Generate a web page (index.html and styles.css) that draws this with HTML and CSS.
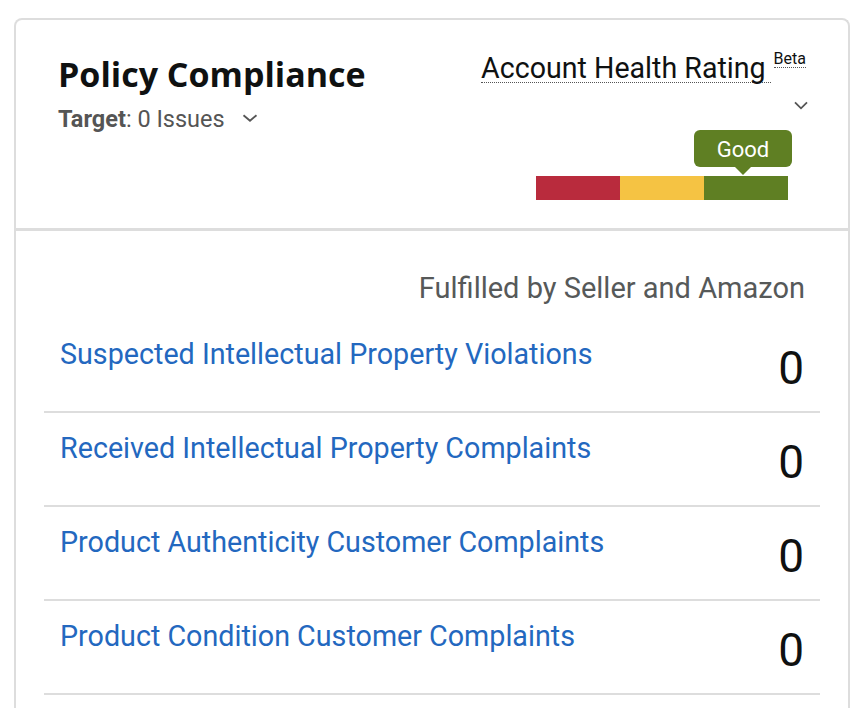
FILE: index.html
```html
<!DOCTYPE html>
<html lang="en">
<head>
<meta charset="utf-8">
<title>Policy Compliance</title>
<link rel="stylesheet" href="styles.css">
</head>
<body>
<div class="card">
  <div class="card-header">
    <div class="head-left">
      <h2 class="title">Policy Compliance</h2>
      <div class="target">
        <span><b>Target</b>: 0 Issues</span>
        <svg class="chev chev-target" width="16" height="8" viewBox="0 0 16 8"><path d="M1.5 1.2 L8 6.8 L14.5 1.2" fill="none" stroke="#555" stroke-width="1.8"/></svg>
      </div>
    </div>
    <div class="head-right">
      <div class="ahr-row">
        <span class="ahr">Account Health Rating</span>
        <span class="beta">Beta</span>
      </div>
      <svg class="chev chev-right" width="14" height="9" viewBox="0 0 14 9"><path d="M1 1.3 L7 7.3 L13 1.3" fill="none" stroke="#555" stroke-width="1.8"/></svg>
      <div class="gauge">
        <div class="badge">Good</div>
        <div class="bar">
          <span class="seg seg-red"></span>
          <span class="seg seg-yellow"></span>
          <span class="seg seg-green"></span>
        </div>
      </div>
    </div>
  </div>
  <div class="card-body">
    <div class="subhead">Fulfilled by Seller and Amazon</div>
    <div class="row">
      <a class="metric-link" href="#">Suspected Intellectual Property Violations</a>
      <span class="count">0</span>
    </div>
    <div class="row">
      <a class="metric-link" href="#">Received Intellectual Property Complaints</a>
      <span class="count">0</span>
    </div>
    <div class="row">
      <a class="metric-link" href="#">Product Authenticity Customer Complaints</a>
      <span class="count">0</span>
    </div>
    <div class="row">
      <a class="metric-link" href="#">Product Condition Customer Complaints</a>
      <span class="count">0</span>
    </div>
  </div>
</div>
</body>
</html>
```

FILE: styles.css
```css
html, body {
  margin: 0;
  padding: 0;
  background: #fff;
}
body {
  font-family: Roboto, "Liberation Sans", sans-serif;
  color: #0f1111;
  overflow: hidden;
  height: 708px;
}
.card {
  margin: 18px 0 0 14px;
  width: 832px;
  border: 2px solid #dddddd;
  border-bottom: none;
  border-radius: 8px 8px 0 0;
  height: 720px;
}
.card-header {
  display: flex;
  justify-content: space-between;
  align-items: flex-start;
  padding: 35px 40px 28px 42px;
  border-bottom: 3px solid #dddddd;
}
.title {
  margin: -1px 0 0 0;
  font-family: "Open Sans", Roboto, sans-serif;
  font-weight: 700;
  font-size: 34px;
  line-height: 40px;
  color: #0f1111;
}
.target {
  display: flex;
  align-items: center;
  margin-top: 11px;
  font-size: 23.5px;
  line-height: 28px;
  color: #555555;
}
.target b {
  font-weight: 700;
}
.chev-target {
  margin-left: 17px;
  margin-top: -2px;
}
.head-right {
  display: flex;
  flex-direction: column;
  align-items: flex-end;
}
.ahr-row {
  display: flex;
  align-items: flex-start;
  height: 28px;
}
.ahr {
  display: inline-block;
  font-size: 28.6px;
  line-height: 27px;
  padding-right: 5px;
  color: #0f1111;
  border-bottom: 1px dotted #555;
}
.beta {
  display: inline-block;
  margin-left: 3px;
  margin-right: 2px;
  margin-top: -5.5px;
  font-size: 16px;
  line-height: 17px;
  color: #0f1111;
  border-bottom: 1px dotted #555;
}
.chev-right {
  display: block;
  margin-top: 18px;
}
.gauge {
  position: relative;
  width: 252px;
  height: 70px;
  margin-top: 20px;
  margin-right: 20px;
}
.badge {
  position: absolute;
  left: 158px;
  top: 0;
  width: 98px;
  height: 37px;
  box-sizing: border-box;
  background: #5f7f23;
  color: #fff;
  border-radius: 6px;
  font-size: 22px;
  line-height: 40px;
  text-align: center;
}
.badge::after {
  content: "";
  position: absolute;
  left: 40px;
  top: 36px;
  border-left: 9px solid transparent;
  border-right: 9px solid transparent;
  border-top: 9px solid #5f7f23;
}
.bar {
  position: absolute;
  left: 0;
  bottom: 0;
  display: flex;
  width: 252px;
  height: 24px;
}
.seg {
  flex: 1;
}
.seg-red { background: #b92b3d; }
.seg-yellow { background: #f5c343; }
.seg-green { background: #5f7f23; }
.card-body {
  padding: 40px 28px 0 28px;
}
.subhead {
  text-align: right;
  padding-right: 15px;
  font-size: 29px;
  line-height: 34px;
  color: #565959;
  margin-bottom: 14px;
}
.row {
  display: flex;
  justify-content: space-between;
  align-items: flex-start;
  box-sizing: border-box;
  height: 94px;
  padding: 18px 16px 0 16px;
  border-bottom: 2px solid #dddddd;
}
.metric-link {
  font-size: 28.7px;
  line-height: 34px;
  color: #2368bf;
  text-decoration: none;
}
.count {
  font-size: 46px;
  line-height: 54px;
  margin-top: 4px;
  color: #0f1111;
}
```
